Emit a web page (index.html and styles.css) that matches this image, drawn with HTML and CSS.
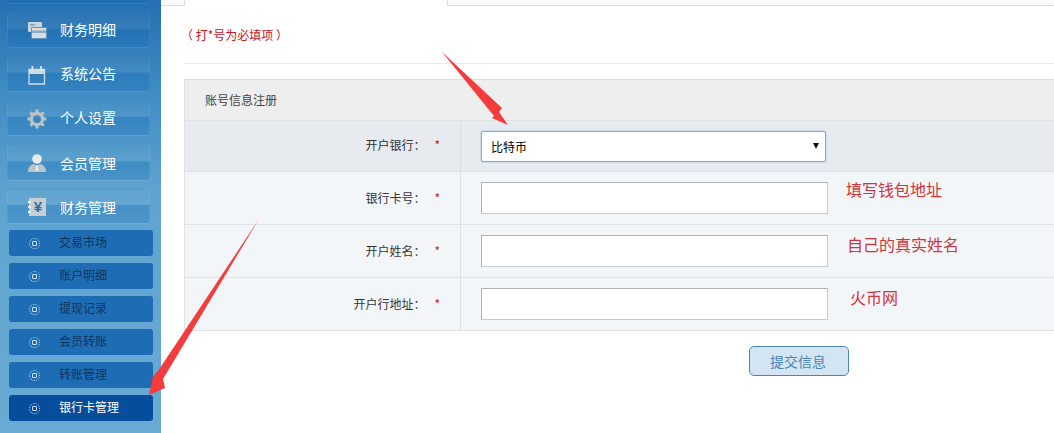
FILE: index.html
```html
<!DOCTYPE html>
<html lang="zh">
<head>
<meta charset="utf-8">
<title>账号信息注册</title>
<link rel="stylesheet" href="styles.css">
</head>
<body>
<div class="page">
  <nav class="sidebar">
    <a class="nav-btn nav-cut"></a>
    <a class="nav-btn nav-up">
      <svg class="ico" viewBox="0 0 20 20"><rect x="1" y="1" width="14" height="10" rx="1" fill="#c9d4dc"/><rect x="3" y="3" width="5" height="1.600" fill="#7ea8c8"/><rect x="4" y="6" width="16" height="12" rx="1" fill="#5f95c2"/><rect x="5" y="7" width="14" height="10" fill="#d6dde2"/><rect x="5" y="9.500" width="14" height="2.500" fill="#8fa9bd"/></svg>
      <span>财务明细</span>
    </a>
    <a class="nav-btn nav-up">
      <svg class="ico" viewBox="0 0 20 20"><path d="M2 4.500h15.500v14.500H2z" fill="none" stroke="#cfdbe4" stroke-width="1.300"/><rect x="2" y="5" width="15.500" height="4" fill="#cfdbe4"/><rect x="4.500" y="1" width="1.800" height="5" fill="#dde5ea"/><rect x="13.200" y="1" width="1.800" height="5" fill="#dde5ea"/></svg>
      <span>系统公告</span>
    </a>
    <a class="nav-btn nav-up">
      <svg class="ico" viewBox="0 0 20 20"><circle cx="10" cy="10" r="5.600" fill="none" stroke="#b9c3c8" stroke-width="3.400"/><path d="M10 0.500v4M10 15.500v4M0.500 10h4M15.500 10h4M3.300 3.300l2.800 2.800M13.900 13.900l2.800 2.800M3.300 16.700l2.800-2.800M13.900 6.100l2.800-2.800" stroke="#b9c3c8" stroke-width="3"/></svg>
      <span>个人设置</span>
    </a>
    <a class="nav-btn nav-tall">
      <svg class="ico" viewBox="0 0 20 20"><circle cx="10" cy="6" r="4.800" fill="#e6ebee"/><path d="M1 19c0-5 3-7.500 6-8l3 2 3-2c3 .5 6 3 6 8z" fill="#bcc4c6"/><path d="M9.200 12h1.600l.7 6h-3z" fill="#e6ebee"/></svg>
      <span>会员管理</span>
    </a>
    <a class="nav-btn">
      <svg class="ico" viewBox="0 0 20 20"><rect x="2" y="1" width="17" height="18" fill="#c6ced2"/><rect x="1" y="4" width="3" height="2" fill="#eef1f3"/><rect x="1" y="9" width="3" height="2" fill="#eef1f3"/><rect x="1" y="14" width="3" height="2" fill="#eef1f3"/><text x="11" y="14.500" class="yen">¥</text></svg>
      <span>财务管理</span>
    </a>
    <ul class="subnav">
      <li class="sub-item"><i class="ring"></i><span>交易市场</span></li>
      <li class="sub-item"><i class="ring"></i><span>账户明细</span></li>
      <li class="sub-item"><i class="ring"></i><span>提现记录</span></li>
      <li class="sub-item"><i class="ring"></i><span>会员转账</span></li>
      <li class="sub-item"><i class="ring"></i><span>转账管理</span></li>
      <li class="sub-item active"><i class="ring"></i><span>银行卡管理</span></li>
    </ul>
  </nav>

  <main class="main">
    <div class="tabs"><div class="tab"></div></div>
    <div class="content">
      <p class="notice">（ 打*号为必填项 ）</p>
      <section class="panel">
        <h2 class="panel-title">账号信息注册</h2>
        <div class="row row-first">
          <div class="label">开户银行：<b>*</b></div>
          <div class="field">
            <div class="select"><span>比特币</span><i class="caret"></i></div>
          </div>
        </div>
        <div class="row">
          <div class="label">银行卡号：<b>*</b></div>
          <div class="field"><input class="input" type="text"><span class="note note-a">填写钱包地址</span></div>
        </div>
        <div class="row">
          <div class="label">开户姓名：<b>*</b></div>
          <div class="field"><input class="input" type="text"><span class="note note-b">自己的真实姓名</span></div>
        </div>
        <div class="row">
          <div class="label">开户行地址：<b>*</b></div>
          <div class="field"><input class="input" type="text"><span class="note note-c">火币网</span></div>
        </div>
      </section>
      <div class="actions"><button class="submit" type="button">提交信息</button></div>
    </div>
  </main>

  <svg class="arrows" viewBox="0 0 1054 433">
    <path d="M442 52L502 108L499 112L508 125L492 118L494 116Z" fill="#f53c3c"/>
    <path d="M259 219L163 379L165 388L149 395L153 376L158 371Z" fill="#f53c3c"/>
  </svg>
</div>
</body>
</html>
```
FILE: styles.css
```css
html, body {
  margin: 0;
  height: 433px;
  overflow: hidden;
  background: #fff;
  font-family: "Noto Sans CJK SC", "Liberation Sans", sans-serif;
  font-size: 12px;
  color: #333;
}
.page {
  position: relative;
  display: flex;
  width: 1054px;
  height: 433px;
  overflow: hidden;
}
.sidebar {
  box-sizing: border-box;
  width: 161px;
  height: 433px;
  flex: none;
  padding: 0 11px 0 7px;
  background: linear-gradient(#246fb0 0, #3f8bc3 90px, #5ea3d0 190px, #69aad3 433px);
  overflow: hidden;
}
.nav-btn {
  box-sizing: border-box;
  display: flex;
  align-items: center;
  height: 35px;
  margin-bottom: 9px;
  border: 1px solid rgba(255, 255, 255, .07);
  border-radius: 4px;
  background: linear-gradient(rgba(255, 255, 255, .02), rgba(255, 255, 255, .05) 42%, rgba(16, 104, 180, .3) 48%, rgba(16, 104, 180, .24) 100%);
  color: #fff;
  font-size: 14px;
}
.nav-btn span { margin-left: 13px; }
.nav-up span { padding-bottom: 4px; }
.nav-cut { margin-top: -31px; }
.nav-tall { height: 36px; margin-bottom: 8px; }
.ico {
  width: 20px;
  height: 20px;
  margin-left: 19px;
  flex: none;
}
.yen {
  font-family: "Liberation Sans", sans-serif;
  font-size: 15px;
  font-weight: bold;
  fill: #2f6f9f;
  text-anchor: middle;
}
.subnav {
  list-style: none;
  margin: -3px -3px 0 2px;
  padding: 0;
  display: flex;
  flex-direction: column;
  gap: 7px;
}
.sub-item {
  box-sizing: border-box;
  display: flex;
  align-items: center;
  height: 26px;
  border-radius: 3px;
  background: #1e6db4;
  color: #0e3560;
}
.sub-item span { padding-bottom: 3px; }
.sub-item.active {
  background: #064d9b;
  color: #fff;
}
.ring {
  box-sizing: border-box;
  width: 11px;
  height: 11px;
  margin-left: 20px;
  margin-right: 19px;
  border: 1px dotted #b5d5ec;
  border-radius: 50%;
  background: radial-gradient(circle, transparent 0 1.500px, #cfe3f2 1.800px 2.700px, transparent 3px);
}
.main {
  flex: 1;
  min-width: 0;
}
.tabs {
  box-sizing: border-box;
  height: 6px;
  padding-left: 23px;
  background: #fafafa;
  border-bottom: 1px solid #ddd;
}
.tab {
  box-sizing: border-box;
  width: 264px;
  height: 6px;
  background: #fff;
  border-left: 1px solid #ddd;
  border-right: 1px solid #ddd;
}
.content { padding-left: 23px; }
.notice {
  box-sizing: border-box;
  height: 58px;
  margin: 0 0 15px -3px;
  padding-top: 20px;
  line-height: 18px;
  color: #c9161d;
  position: relative;
}
.notice::after {
  content: "";
  position: absolute;
  left: 3px;
  right: 0;
  bottom: 0;
  border-bottom: 1px solid #e8e8e8;
}
.panel {
  border-top: 1px solid #dcdcdc;
  border-left: 1px solid #dfe3e6;
}
.panel-title {
  box-sizing: border-box;
  height: 41px;
  margin: 0;
  padding-left: 20px;
  font-size: 12px;
  font-weight: normal;
  line-height: 40px;
  color: #444;
  background: #eeeeee;
  border-bottom: 1px solid #dfe3e6;
}
.row {
  box-sizing: border-box;
  display: grid;
  grid-template-columns: 276px 1fr;
  height: 53px;
  background: #f3f6f9;
  border-bottom: 1px solid #dfe3e6;
}
.row-first {
  height: 51px;
  background: #e7ebef;
}
.label {
  display: flex;
  align-items: center;
  justify-content: flex-end;
  padding-right: 20px;
  padding-bottom: 2px;
  border-right: 1px solid #dbe0e4;
  font-family: "Noto Sans CJK TC", "Noto Sans CJK SC", sans-serif;
  color: #333;
}
.row-first .label { padding-bottom: 4px; }
.label b {
  margin-left: 9px;
  font-weight: normal;
  color: #c9161d;
}
.field {
  display: flex;
  align-items: center;
  padding-left: 20px;
}
.select {
  box-sizing: border-box;
  display: flex;
  align-items: center;
  justify-content: space-between;
  width: 345px;
  height: 31px;
  padding: 0 6px 0 9px;
  background: #fff;
  border: 1px solid #7fa9e0;
  border-radius: 2px;
  box-shadow: 0 0 2px #8ab4ea;
  color: #000;
}
.caret {
  width: 0;
  height: 0;
  border-left: 3.500px solid transparent;
  border-right: 3.500px solid transparent;
  border-top: 6px solid #111;
}
.input {
  box-sizing: border-box;
  width: 347px;
  height: 32px;
  margin: 0;
  padding: 0;
  background: #fff;
  border: 1px solid #c6cacc;
  border-top-color: #aeb2b4;
  border-left-color: #aeb2b4;
  border-radius: 0;
}
.note {
  position: relative;
  font-size: 16px;
  color: #d5333b;
}
.note-a { top: -9px; margin-left: 18px; }
.note-b { top: -7px; margin-left: 19px; }
.note-c { top: -7px; margin-left: 22px; }
.actions {
  padding: 15px 0 0 565px;
}
.submit {
  box-sizing: border-box;
  display: block;
  width: 100px;
  height: 30px;
  padding: 0 2px 0 0;
  background: #d3e5f3;
  border: 1px solid #4a86b8;
  border-radius: 5px;
  font: 14px "Noto Sans CJK SC", "Liberation Sans", sans-serif;
  color: #4a86b8;
}
.arrows {
  position: absolute;
  left: 0;
  top: 0;
  width: 1054px;
  height: 433px;
  pointer-events: none;
}
```
